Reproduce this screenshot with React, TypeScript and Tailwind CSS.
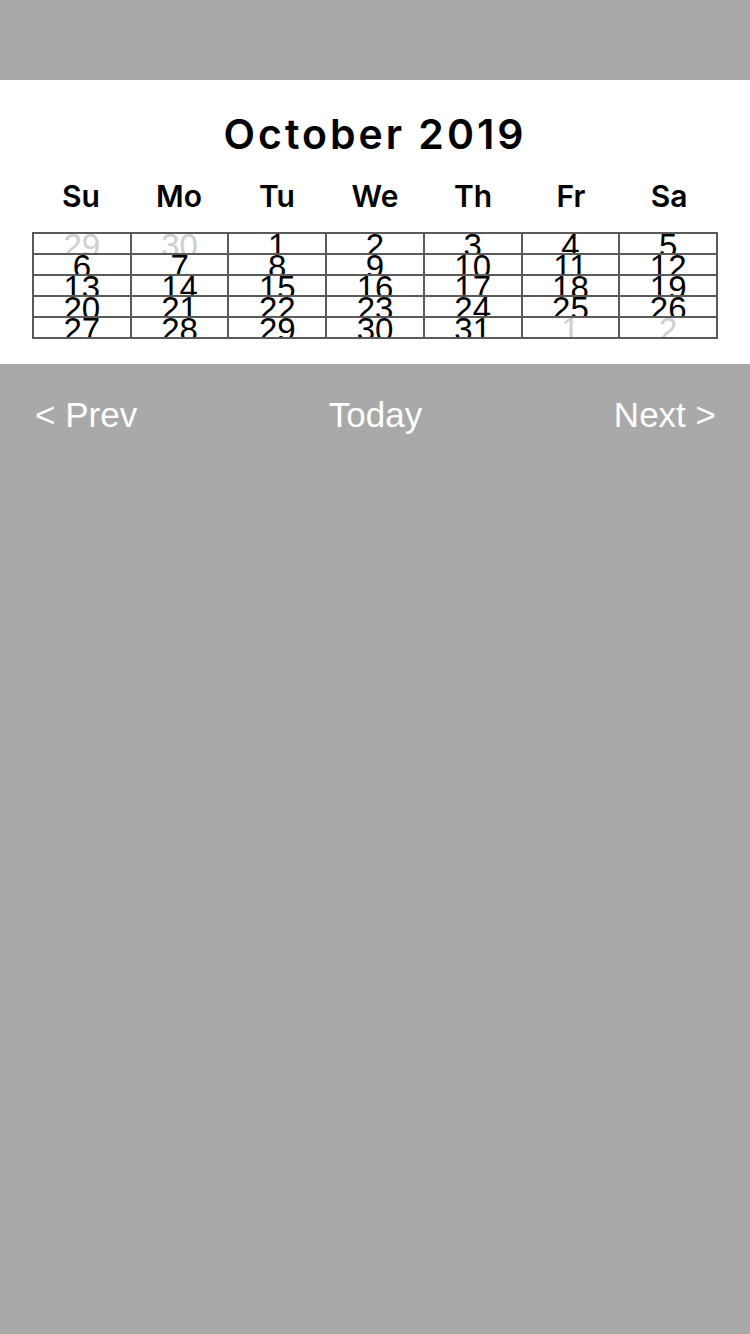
import React from "react";

const days = ["Su", "Mo", "Tu", "We", "Th", "Fr", "Sa"];

type Cell = { n: number; cur: boolean };

function buildCells(): Cell[][] {
  const cells: Cell[] = [];
  cells.push({ n: 29, cur: false }, { n: 30, cur: false });
  for (let i = 1; i <= 31; i++) cells.push({ n: i, cur: true });
  cells.push({ n: 1, cur: false }, { n: 2, cur: false });
  const rows: Cell[][] = [];
  for (let r = 0; r < 5; r++) rows.push(cells.slice(r * 7, r * 7 + 7));
  return rows;
}

export default function App() {
  const rows = buildCells();
  return (
    <div className="min-h-[1334px] w-[750px] bg-[#a9a9a9]" style={{ fontFamily: "'Liberation Sans', Arial, sans-serif" }}>
      <div className="h-[80px]" />
      <div className="bg-white pt-[30px] pb-[25px]">
        <div
          className="text-center text-[41px] leading-[48px] font-semibold tracking-[3px] text-black"
          style={{ fontFamily: "Inter, 'Liberation Sans', sans-serif" }}
        >
          October 2019
        </div>
        <div
          className="mx-[32px] mt-[20px] grid w-[686px] grid-cols-7"
          style={{ fontFamily: "Inter, 'Liberation Sans', sans-serif" }}
        >
          {days.map((d) => (
            <div key={d} className="text-center text-[30px] leading-[36px] font-semibold text-black">
              {d}
            </div>
          ))}
        </div>
        <div className="mx-[32px] mt-[18px] w-[686px] border-l-2 border-t-2 border-[#5a5a5a]">
          {rows.map((row, ri) => (
            <div key={ri} className="grid grid-cols-7">
              {row.map((c, ci) => (
                <div
                  key={ci}
                  className="h-[21px] overflow-hidden border-r-2 border-b-2 border-[#5a5a5a] text-center"
                >
                  <div className={`text-[33px] leading-[24px] ${c.cur ? "text-black" : "text-[#cfcfcf]"}`}>{c.n}</div>
                </div>
              ))}
            </div>
          ))}
        </div>
      </div>
      <div className="mt-[31px] flex items-center justify-between pl-[35px] pr-[34px] text-[35px] leading-[40px] text-white">
        <span>&lt; Prev</span>
        <span>Today</span>
        <span>Next &gt;</span>
      </div>
    </div>
  );
}
